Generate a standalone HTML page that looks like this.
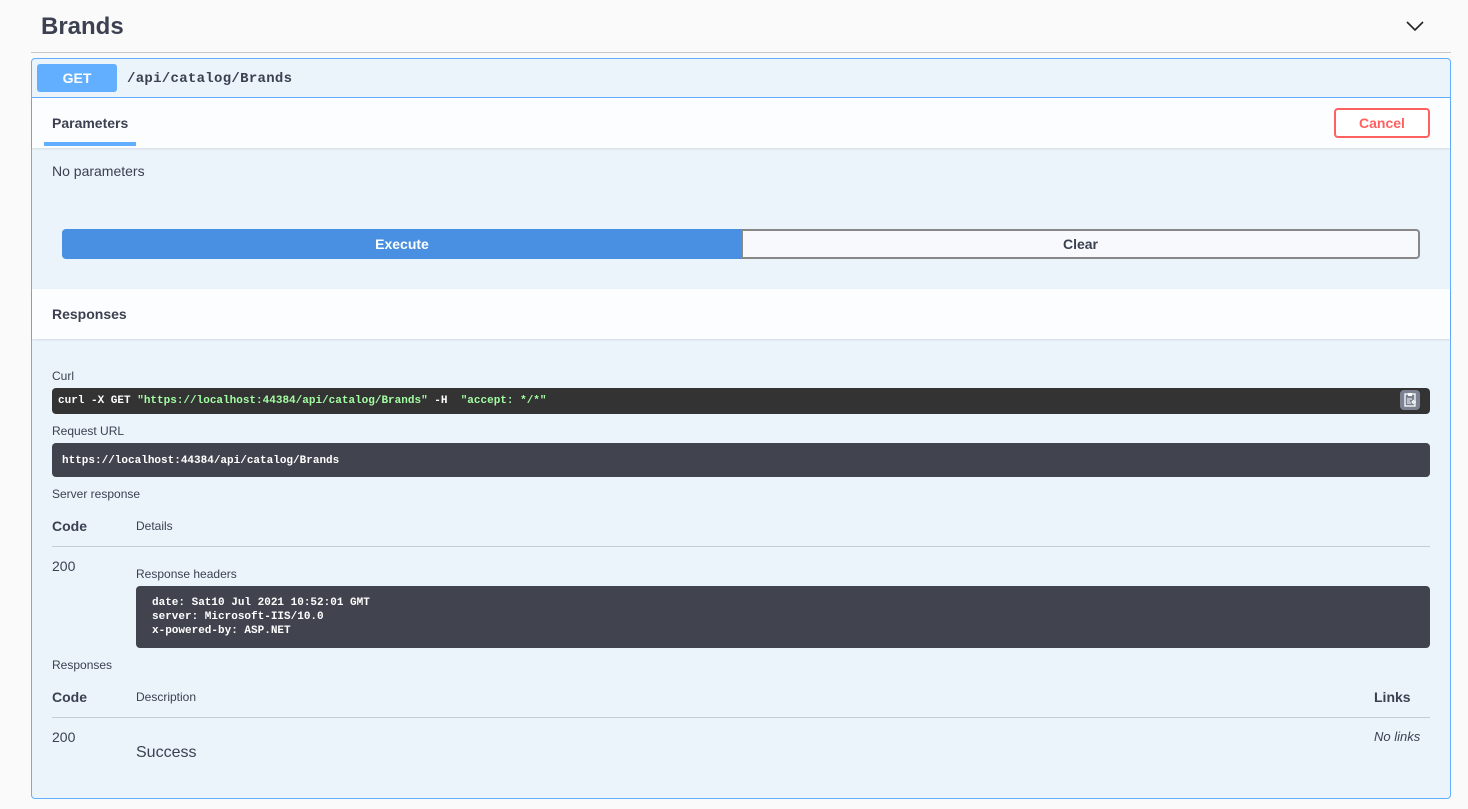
<!DOCTYPE html>
<html><head><meta charset="utf-8"><style>
*{box-sizing:border-box;margin:0;padding:0}
body{width:1468px;height:809px;background:#fafafa;font-family:"Liberation Sans",sans-serif;color:#3b4151;position:relative;overflow:hidden}
.a{position:absolute}
.mono{font-family:"Liberation Mono",monospace;font-weight:bold}
.lbl{font-size:12px;color:#3b4151}
.dark{background:#41444e;border-radius:4px;color:#fff}
</style></head><body>
<div class="a" style="left:41px;top:13px;font-size:24px;font-weight:bold;color:#3b4151">Brands</div>
<svg class="a" style="left:1405px;top:19px" width="20" height="14" viewBox="0 0 20 14"><path d="M2 3l8 8 8-8" fill="none" stroke="#222" stroke-width="1.6"/></svg>
<div class="a" style="left:31px;top:52px;width:1420px;height:1px;background:#c8c8c8"></div>
<div class="a" style="left:31px;top:58px;width:1420px;height:741px;border:1px solid #61affe;border-radius:4px;background:#ebf3fb"></div>
<div class="a" style="left:32px;top:97px;width:1418px;height:1px;background:#61affe"></div>
<div class="a" style="left:37px;top:64px;width:80px;height:28px;background:#61affe;border-radius:3px;color:#fff;font-weight:bold;font-size:14px;text-align:center;line-height:28px">GET</div>
<div class="a mono" style="left:127px;top:71px;font-size:14px;letter-spacing:0.3px;color:#3b4151">/api/catalog/Brands</div>
<div class="a" style="left:32px;top:98px;width:1418px;height:50px;background:#fcfdff;box-shadow:0 1px 2px rgba(0,0,0,.1)"></div>
<div class="a" style="left:52px;top:115px;font-size:14px;font-weight:bold">Parameters</div>
<div class="a" style="left:44px;top:142px;width:92px;height:4px;background:#61affe"></div>
<div class="a" style="left:1334px;top:108px;width:96px;height:30px;border:2px solid #ff6060;border-radius:4px;color:#ff6060;font-weight:bold;font-size:14px;text-align:center;line-height:26px;background:#fff">Cancel</div>
<div class="a" style="left:52px;top:163px;font-size:14px">No parameters</div>
<div class="a" style="left:62px;top:229px;width:680px;height:30px;background:#4990e2;border-radius:4px 0 0 4px;color:#fff;font-weight:bold;font-size:14px;text-align:center;line-height:30px">Execute</div>
<div class="a" style="left:741px;top:229px;width:679px;height:30px;border:2px solid #888;border-radius:0 4px 4px 0;background:#f7f9fc;font-weight:bold;font-size:14px;text-align:center;line-height:26px">Clear</div>
<div class="a" style="left:32px;top:289px;width:1418px;height:50px;background:#fcfdff;box-shadow:0 1px 2px rgba(0,0,0,.1)"></div>
<div class="a" style="left:52px;top:306px;font-size:14px;font-weight:bold">Responses</div>
<div class="a lbl" style="left:52px;top:369px">Curl</div>
<div class="a mono" style="left:52px;top:388px;width:1378px;height:26px;background:#333;border-radius:4px;color:#fff;font-size:11px;line-height:26px;padding-left:6px;white-space:pre">curl -X GET <span style="color:#a2fca2">"https://localhost:44384/api/catalog/Brands"</span> -H  <span style="color:#a2fca2">"accept: */*"</span></div>
<div class="a" style="left:1400px;top:390px;width:20px;height:20px;background:#7d8293;border-radius:4px"><svg width="20" height="20" viewBox="0 0 20 20"><rect x="5" y="4" width="10" height="12" fill="none" stroke="#fff" stroke-width="1.3"/><rect x="8" y="3" width="4" height="3" fill="#fff"/><path d="M7 9h5M7 11h3M7 13h4M16 12h-4m2-2l-2 2 2 2" stroke="#fff" stroke-width="1.1" fill="none"/></svg></div>
<div class="a lbl" style="left:52px;top:424px">Request URL</div>
<div class="a mono dark" style="left:52px;top:443px;width:1378px;height:34px;font-size:11px;line-height:36px;padding-left:10px">https://localhost:44384/api/catalog/Brands</div>
<div class="a lbl" style="left:52px;top:487px">Server response</div>
<div class="a" style="left:52px;top:518px;font-size:14px;font-weight:bold">Code</div>
<div class="a lbl" style="left:136px;top:519px">Details</div>
<div class="a" style="left:52px;top:546px;width:1378px;height:1px;background:#c5ccd6"></div>
<div class="a" style="left:52px;top:558px;font-size:14px">200</div>
<div class="a lbl" style="left:136px;top:567px">Response headers</div>
<div class="a mono dark" style="left:136px;top:586px;width:1294px;height:62px;font-size:11px;line-height:14px;padding:10px 16px">date: Sat10 Jul 2021 10:52:01 GMT<br>server: Microsoft-IIS/10.0<br>x-powered-by: ASP.NET</div>
<div class="a lbl" style="left:52px;top:658px">Responses</div>
<div class="a" style="left:52px;top:689px;font-size:14px;font-weight:bold">Code</div>
<div class="a lbl" style="left:136px;top:690px">Description</div>
<div class="a" style="left:1374px;top:689px;font-size:14px;font-weight:bold">Links</div>
<div class="a" style="left:52px;top:717px;width:1378px;height:1px;background:#c5ccd6"></div>
<div class="a" style="left:52px;top:729px;font-size:14px">200</div>
<div class="a" style="left:136px;top:744px;font-size:16px">Success</div>
<div class="a" style="left:1374px;top:729px;font-size:13px;font-style:italic">No links</div>
</body></html>
